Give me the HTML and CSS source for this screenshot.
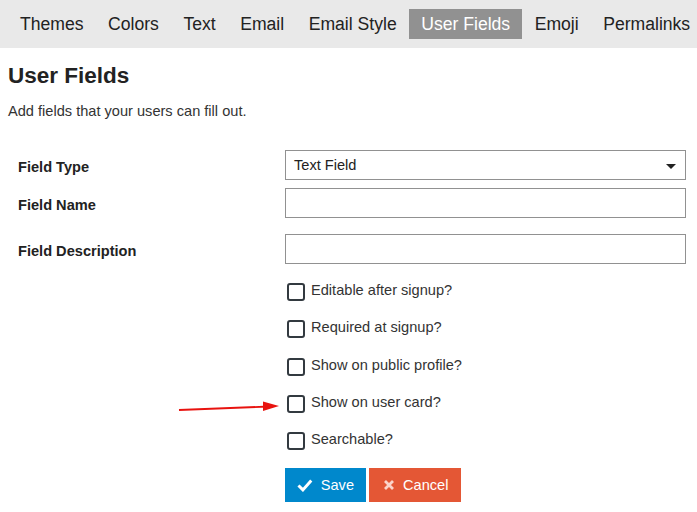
FILE: index.html
```html
<!DOCTYPE html>
<html lang="en">
<head>
    <meta charset="UTF-8">
    <title>User Fields</title>
    <link rel="stylesheet" href="styles.css">
</head>
<body>
    <div class="nav">
        <a class="tab">Themes</a>
        <a class="tab">Colors</a>
        <a class="tab">Text</a>
        <a class="tab">Email</a>
        <a class="tab">Email Style</a>
        <a class="tab active">User Fields</a>
        <a class="tab">Emoji</a>
        <a class="tab">Permalinks</a>
    </div>

    <div class="content">
        <h2 class="title">User Fields</h2>
        <p class="intro">Add fields that your users can fill out.</p>

        <div class="form">
            <div class="row">
                <label class="label">Field Type</label>
                <div class="select">
                    <span>Text Field</span>
                    <span class="caret"></span>
                </div>
            </div>
            <div class="row">
                <label class="label">Field Name</label>
                <input class="input" type="text">
            </div>
            <div class="row row-wide">
                <label class="label">Field Description</label>
                <input class="input" type="text">
            </div>

            <div class="checks">
                <label class="check"><span class="box"></span>Editable after signup?</label>
                <label class="check"><span class="box"></span>Required at signup?</label>
                <label class="check"><span class="box"></span>Show on public profile?</label>
                <label class="check marked"><span class="box"></span>Show on user card?
                    <svg class="arrow" width="112" height="14" viewBox="0 0 112 14">
                        <line x1="2" y1="10" x2="92" y2="6.5" stroke="#e8130f" stroke-width="1.8"/>
                        <polygon points="86,1.5 102,6 86,11" fill="#e8130f"/>
                    </svg>
                </label>
                <label class="check"><span class="box"></span>Searchable?</label>
            </div>

            <div class="buttons">
                <button class="btn btn-save">
                    <svg width="16" height="14" viewBox="0 0 16 14"><path d="M1.5 7.5 L6 12 L14.5 2.5" fill="none" stroke="#fff" stroke-width="3"/></svg>
                    Save
                </button>
                <button class="btn btn-cancel">
                    <svg width="12" height="12" viewBox="0 0 12 12"><path d="M2 2 L10 10 M10 2 L2 10" fill="none" stroke="#fbd4ca" stroke-width="2.8"/></svg>
                    Cancel
                </button>
            </div>
        </div>
    </div>
</body>
</html>
```

FILE: styles.css
```css
* {
    margin: 0;
    padding: 0;
    box-sizing: border-box;
}
body {
    font-family: "Liberation Sans", Arial, sans-serif;
    color: #333;
    background: #fff;
}
.nav {
    background: #e9e9e9;
    height: 48px;
    padding: 9px 8px 0;
    display: flex;
    gap: 0.5px;
    white-space: nowrap;
    overflow: hidden;
}
.tab {
    font-size: 17.6px;
    color: #222;
    padding: 0 12px;
    height: 30px;
    line-height: 30px;
}
.tab.active {
    background: #919191;
    color: #fff;
}
.content {
    padding: 0 8px;
}
.title {
    font-size: 22.5px;
    font-weight: bold;
    color: #222;
    margin-top: 15px;
    line-height: 26px;
}
.intro {
    font-size: 14.6px;
    margin-top: 12px;
    line-height: 20px;
}
.form {
    margin-top: 29px;
    padding-left: 10px;
    width: 678px;
}
.row {
    display: grid;
    grid-template-columns: 267px 401px;
    align-items: center;
    margin-top: 8px;
}
.row:first-child {
    margin-top: 0;
}
.row-wide {
    margin-top: 16px;
}
.label {
    font-size: 14.6px;
    font-weight: bold;
    color: #222;
    padding-top: 3px;
}
.select, .input {
    height: 30px;
    border: 1px solid #919191;
    background: #fff;
    font-family: inherit;
    font-size: 14.6px;
    color: #222;
}
.select {
    display: flex;
    align-items: center;
    justify-content: space-between;
    padding: 0 9px 0 8px;
}
.caret {
    width: 0;
    height: 0;
    border-left: 5px solid transparent;
    border-right: 5px solid transparent;
    border-top: 5px solid #222;
    margin-top: 2px;
}
.checks {
    margin-left: 269px;
    margin-top: 17px;
    display: flex;
    flex-direction: column;
    gap: 19.3px;
}
.check {
    position: relative;
    display: flex;
    align-items: center;
    height: 18px;
    font-size: 14.6px;
    color: #333;
}
.box {
    width: 18px;
    height: 18px;
    border: 2px solid #333a40;
    border-radius: 3px;
    margin-right: 6px;
    margin-top: 4px;
}
.arrow {
    position: absolute;
    left: -110px;
    top: 7px;
}
.buttons {
    margin-left: 267px;
    margin-top: 20px;
    display: flex;
    gap: 3px;
}
.btn {
    height: 34px;
    border: none;
    font-family: inherit;
    font-size: 14.6px;
    color: #fff;
    display: flex;
    align-items: center;
    gap: 8px;
    padding: 0 12px;
}
.btn-save {
    background: #0088cc;
    width: 81px;
}
.btn-cancel {
    background: #e45735;
    width: 92px;
    padding-left: 14px;
}
```
